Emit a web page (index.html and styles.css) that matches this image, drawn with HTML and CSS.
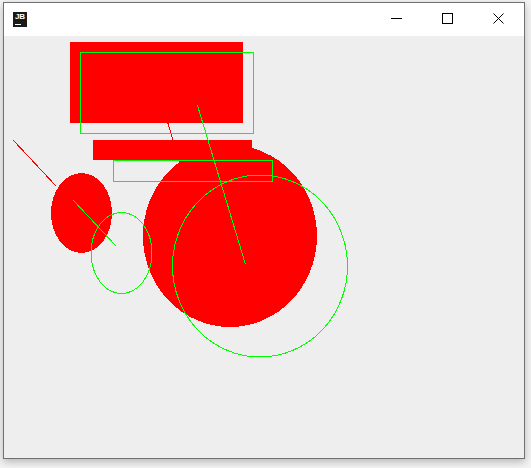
FILE: index.html
```html
<!DOCTYPE html>
<html>
<head>
<meta charset="utf-8">
<link rel="stylesheet" href="styles.css">
</head>
<body>
<div class="window">
  <div class="titlebar">
    <div class="app-icon"><span class="jb">JB</span><span class="jb-bar"></span></div>
    <div class="spacer"></div>
    <div class="tb-btn">
      <svg width="11" height="11" viewBox="0 0 11 11" shape-rendering="crispEdges"><line x1="0" y1="5.5" x2="11" y2="5.5" stroke="#000" stroke-width="1"/></svg>
    </div>
    <div class="tb-btn">
      <svg width="11" height="11" viewBox="0 0 11 11" shape-rendering="crispEdges"><rect x="0.5" y="0.5" width="10" height="10" fill="none" stroke="#000" stroke-width="1"/></svg>
    </div>
    <div class="tb-btn">
      <svg width="11" height="11" viewBox="0 0 11 11"><path d="M0.5 0.5 L10.5 10.5 M10.5 0.5 L0.5 10.5" stroke="#000" stroke-width="1" fill="none"/></svg>
    </div>
  </div>
  <div class="content">
    <svg class="canvas" width="520" height="422" viewBox="4 36 520 422">
      <line class="aliased" x1="13.5" y1="140.5" x2="56.5" y2="186.5" stroke="#ff0000"/>
      <line class="aliased" x1="147.5" y1="55.5" x2="195.5" y2="214.5" stroke="#ff0000"/>
      <rect x="70" y="42" width="173" height="81" fill="#ff0000"/>
      <rect x="93" y="140" width="159" height="20" fill="#ff0000"/>
      <ellipse class="aliased" cx="81.5" cy="213" rx="30.5" ry="40" fill="#ff0000"/>
      <ellipse class="aliased" cx="230" cy="236" rx="87" ry="91" fill="#ff0000"/>
      <line class="aliased" x1="73.5" y1="200.5" x2="116.5" y2="246.5" stroke="#00ff00"/>
      <line class="aliased" x1="197.5" y1="105.5" x2="245.5" y2="264.5" stroke="#00ff00"/>
      <path class="aliased" d="M80 52H254V134H80Z M81 53V133H253V53Z" fill="#00ff00" fill-rule="evenodd"/>
      <path class="aliased" d="M113 160H273V182H113Z M114 161V181H272V161Z" fill="#00ff00" fill-rule="evenodd"/>
      <ellipse class="aliased" cx="121.5" cy="253" rx="30.5" ry="40.5" fill="none" stroke="#00ff00"/>
      <ellipse class="aliased" cx="260" cy="266" rx="87.5" ry="91" fill="none" stroke="#00ff00"/>
    </svg>
  </div>
</div>
</body>
</html>
```

FILE: styles.css
```css
html, body {
  margin: 0;
  padding: 0;
}
body {
  background: #f4f4f4;
  width: 531px;
  height: 468px;
  overflow: hidden;
  font-family: "Liberation Sans", Arial, sans-serif;
}
.window {
  margin: 2px 0 0 3px;
  width: 520px;
  border: 1px solid #707070;
  background: #eeeeee;
  box-shadow: 0 3px 8px rgba(0, 0, 0, 0.25);
}
.titlebar {
  height: 33px;
  background: #ffffff;
  display: flex;
  align-items: flex-start;
}
.app-icon {
  margin: 9px 0 0 9px;
  width: 14px;
  height: 15px;
  background: #1a1a1a;
  position: relative;
  display: flex;
  flex-direction: column;
  align-items: center;
}
.jb {
  color: #fff;
  font-weight: bold;
  font-size: 8px;
  line-height: 8px;
  margin-top: 1px;
  letter-spacing: 0;
}
.jb-bar {
  position: absolute;
  left: 2px;
  bottom: 2px;
  width: 6px;
  height: 1px;
  background: #fff;
}
.spacer {
  flex: 1;
}
.tb-btn {
  width: 51px;
  height: 33px;
  display: flex;
  align-items: center;
  justify-content: center;
}
.tb-btn svg {
  display: block;
  margin-bottom: 2px;
}
.content {
  height: 422px;
  background: #eeeeee;
}
.canvas {
  display: block;
  overflow: visible;
}
.aliased {
  shape-rendering: crispEdges;
}
```
